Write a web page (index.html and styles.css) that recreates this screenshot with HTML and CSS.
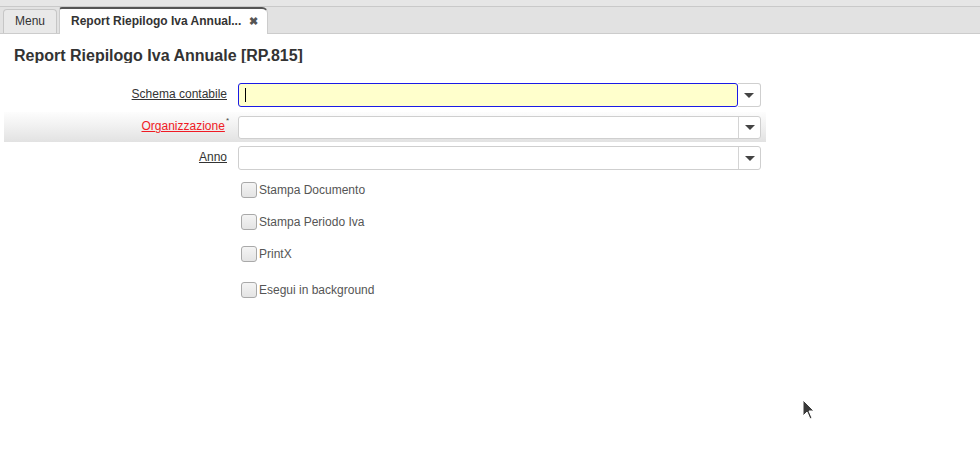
FILE: index.html
```html
<!DOCTYPE html>
<html>
<head>
<meta charset="utf-8">
<link rel="stylesheet" href="styles.css">
</head>
<body>
<div class="topstrip"></div>
<div class="tabs">
  <div class="tab">Menu</div>
  <div class="tab active">Report Riepilogo Iva Annual... <span class="close">✖</span></div>
</div>
<div class="content">
  <h1 class="title">Report Riepilogo Iva Annuale [RP.815]</h1>
  <div class="form">
    <div class="row r1">
      <div class="label"><span class="lbl">Schema contabile</span></div>
      <div class="combo focused">
        <div class="field"><span class="caret"></span></div>
        <div class="btn"><span class="arrow"></span></div>
      </div>
    </div>
    <div class="row r2 mandatory">
      <div class="label"><span class="lbl req">Organizzazione</span><sup class="star">*</sup></div>
      <div class="combo">
        <div class="field"></div>
        <div class="btn"><span class="arrow"></span></div>
      </div>
    </div>
    <div class="row r3">
      <div class="label"><span class="lbl">Anno</span></div>
      <div class="combo">
        <div class="field"></div>
        <div class="btn"><span class="arrow"></span></div>
      </div>
    </div>
    <div class="checks">
      <div class="check"><span class="box"></span>Stampa Documento</div>
      <div class="check"><span class="box"></span>Stampa Periodo Iva</div>
      <div class="check"><span class="box"></span>PrintX</div>
      <div class="check last"><span class="box"></span>Esegui in background</div>
    </div>
  </div>
</div>
<svg class="cursor" width="14" height="22" viewBox="0 0 14 22"><path d="M1 1 L1 17 L5 13 L8 20 L10 19 L7 12 L12 12 Z" fill="#3a3a3a" stroke="#fff" stroke-width="1"/></svg>
</body>
</html>
```
FILE: styles.css
```css
html, body {
  margin: 0;
  padding: 0;
  background: #fff;
  font-family: "Liberation Sans", Arial, sans-serif;
  color: #333;
  width: 980px;
  height: 461px;
  overflow: hidden;
  position: relative;
}
.topstrip {
  height: 6px;
  background: #e6e6e6;
  border-bottom: 1px solid #c9c9c9;
}
.tabs {
  height: 26px;
  background: #e2e2e2;
  border-bottom: 1px solid #cccccc;
  display: flex;
  align-items: flex-end;
  padding-left: 3px;
  gap: 2px;
}
.tab {
  box-sizing: border-box;
  height: 24px;
  padding: 0 11px 0 11px;
  border: 1px solid #c6c6c6;
  border-bottom: none;
  border-radius: 4px 4px 0 0;
  background: #e9e9e9;
  font-size: 12px;
  line-height: 22px;
  color: #333;
  width: 54px;
  white-space: nowrap;
}
.tab.active {
  height: 27px;
  margin-bottom: -1px;
  width: 209px;
  background: #fff;
  border-top: 2px solid #555;
  border-left: 1px solid #ccc;
  border-right: 1px solid #ccc;
  font-weight: bold;
  line-height: 24px;
  padding-left: 11px;
  padding-right: 0;
  border-radius: 3px 6px 0 0;
}
.close {
  font-size: 11px;
  color: #555;
  margin-left: 4px;
}
.content {
  padding: 0 0 0 4px;
}
.title {
  margin: 0;
  padding-left: 10px;
  font-size: 16px;
  font-weight: bold;
  color: #333;
  height: 17px;
  line-height: 19px;
  margin-top: 12px;
  overflow: hidden;
}
.form {
  margin-top: 18px;
  width: 762px;
}
.row {
  display: flex;
  align-items: center;
}
.r1 { height: 27px; }
.r2 {
  height: 30px;
  margin-top: 4px;
  background: linear-gradient(to bottom, #fdfdfd 0%, #f0f0f0 50%, #e2e2e2 100%);
}
.r3 { height: 27px; margin-top: 2px; }
.label {
  width: 223px;
  text-align: right;
  font-size: 12px;
  padding-right: 11px;
  position: relative;
  top: -1px;
  white-space: nowrap;
}
.lbl {
  text-decoration: underline;
  color: #333;
}
.lbl.req { color: #f01a24; }
.r2 .label { padding-right: 9px; width: 225px; }
.star {
  font-size: 8px;
  color: #444;
  vertical-align: top;
  position: relative;
  top: -3px;
  margin-left: 1px;
}
.combo {
  display: flex;
  width: 523px;
  height: 24px;
  box-sizing: border-box;
  border: 1px solid #cfcfcf;
  border-radius: 3px;
  background: #fff;
}
.r2 .combo { height: 23px; }
.field {
  flex: 1;
  height: 100%;
  box-sizing: border-box;
  display: flex;
  align-items: center;
}
.combo.focused {
  border: none;
}
.combo.focused .field {
  border: 1px solid #1a1ae6;
  border-radius: 3px;
  background: #ffffcc;
  height: 24px;
}
.caret {
  display: block;
  width: 1px;
  height: 14px;
  background: #000;
  margin-left: 6px;
}
.btn {
  width: 22px;
  height: 100%;
  box-sizing: border-box;
  border-left: 1px solid #d4d4d4;
  display: flex;
  align-items: center;
  justify-content: center;
}
.combo.focused .btn {
  border: 1px solid #cfcfcf;
  border-left: none;
  border-radius: 0 3px 3px 0;
  width: 23px;
}
.arrow {
  width: 0;
  height: 0;
  border-left: 5px solid transparent;
  border-right: 5px solid transparent;
  border-top: 5px solid #444;
  margin-top: 1px;
}
.checks {
  padding-left: 237px;
  padding-top: 11px;
}
.check {
  display: flex;
  align-items: center;
  height: 16px;
  font-size: 12px;
  color: #555;
  margin-bottom: 16px;
}
.check.last { margin-top: 20px; }
.box {
  display: inline-block;
  width: 16px;
  height: 16px;
  box-sizing: border-box;
  border: 1px solid #a9a9a9;
  border-radius: 3px;
  background: linear-gradient(#f4f4f4, #e4e4e4);
  margin-right: 2px;
}
.cursor {
  position: absolute;
  left: 802px;
  top: 399px;
}
```
